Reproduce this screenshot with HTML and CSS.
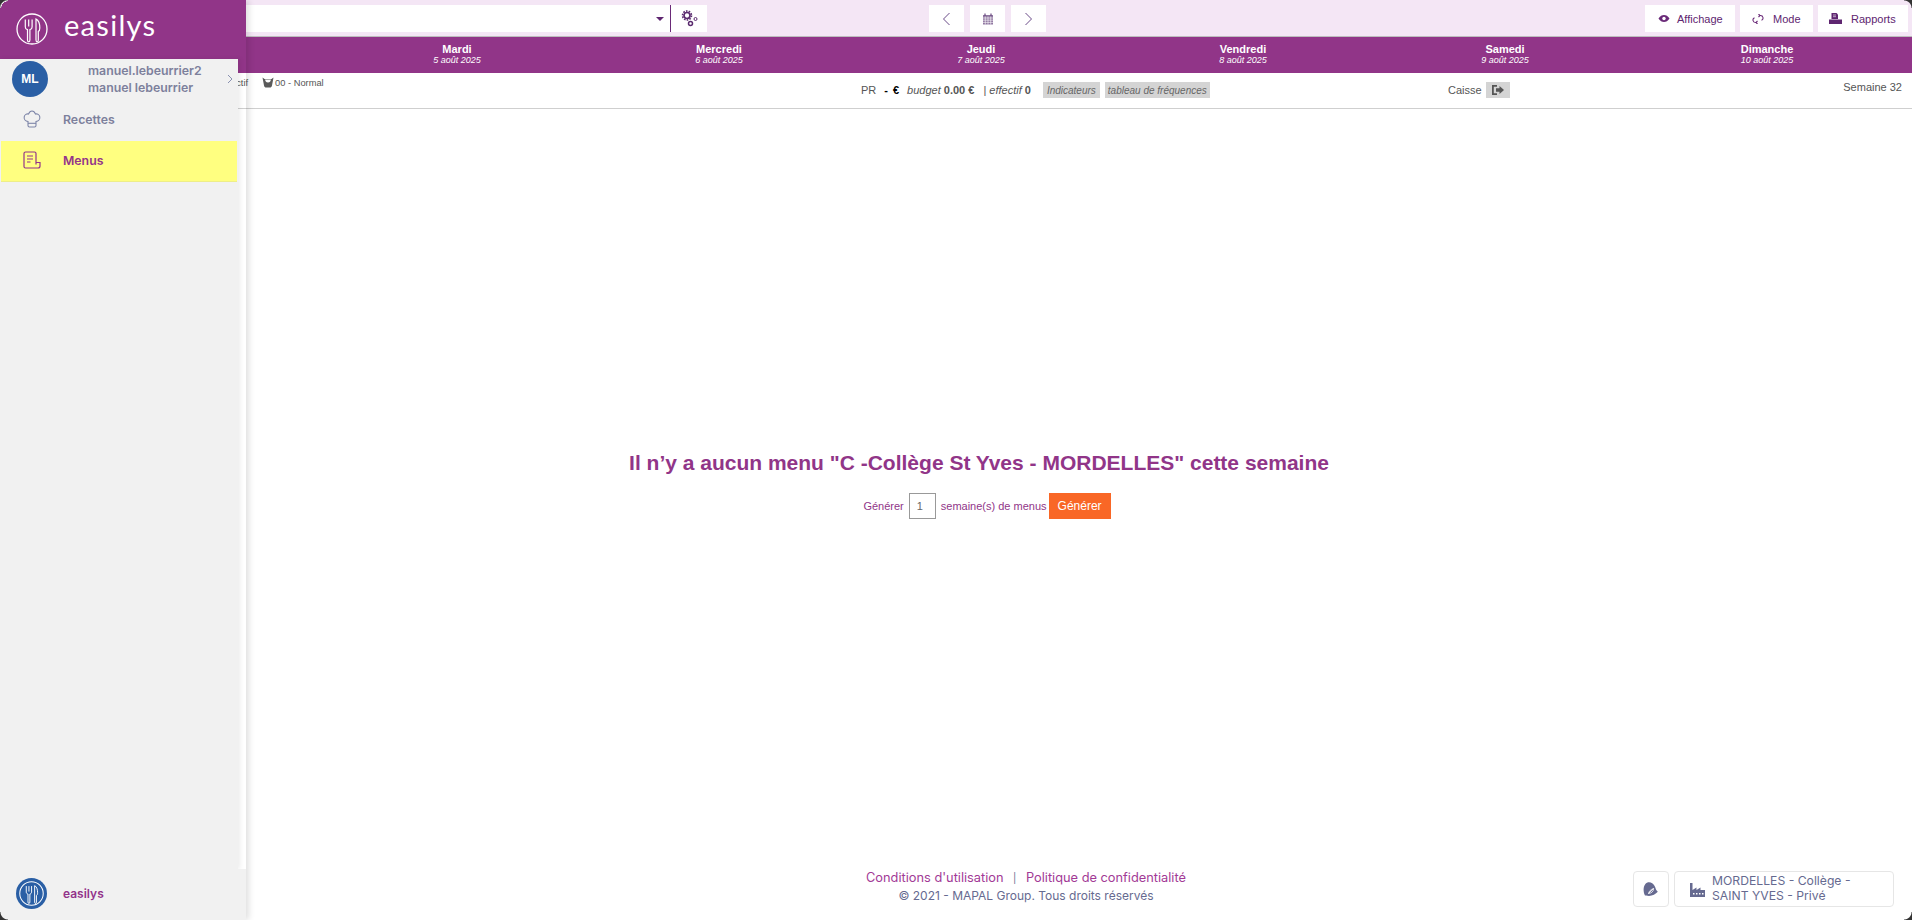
FILE: index.html
```html
<!DOCTYPE html>
<html lang="fr">
<head>
<meta charset="utf-8">
<title>Easilys - Menus</title>
<link rel="stylesheet" href="styles.css">
</head>
<body>
<svg class="defs" width="0" height="0" aria-hidden="true">
  <symbol id="logo" viewBox="0 0 32 32">
    <circle cx="16" cy="16" r="15" fill="none" stroke="currentColor" stroke-width="1.3"/>
    <path d="M9.3 6.500v7.500c0 1.600.9 2.400 2.200 2.700V27c0 2.400 2.400 2.400 2.400 0V16.700c1.300-.3 2.200-1.100 2.200-2.700V6.500M12.700 6.500v7" fill="none" stroke="currentColor" stroke-width="1.2"/>
    <path d="M20 6c2.600 1.200 3.800 4.500 3.800 9 0 2-.5 3-1.500 3.600V27c0 2.400-2.300 2.400-2.300 0V6z" fill="none" stroke="currentColor" stroke-width="1.2"/>
  </symbol>
</svg>
<div class="app">
  <header class="toolbar">
    <div class="select-box"><span class="caret"></span></div>
    <button class="tool-btn gear-btn" aria-label="Réglages">
      <svg width="17" height="17" viewBox="0 0 17 17"><g fill="none" stroke="#5a2a6e"><circle cx="6" cy="5.500" r="3" stroke-width="1.7"/><circle cx="6" cy="5.500" r="4.500" stroke-width="1.6" stroke-dasharray="1.6 1.200"/><circle cx="9.500" cy="13.500" r="2" stroke-width="1.500"/><circle cx="14.500" cy="9" r="1.500" stroke-width="1"/></g></svg>
    </button>
    <nav class="week-nav">
      <button class="tool-btn nav-btn" aria-label="Précédent"><svg width="9" height="14" viewBox="0 0 9 14"><path d="M7.500 1 1.500 7l6 6" fill="none" stroke="#6a4a88" stroke-width="1"/></svg></button>
      <button class="tool-btn nav-btn" aria-label="Calendrier"><svg width="12" height="12" viewBox="0 0 12 12"><path d="M1 2h10v9.500H1z" fill="#8f76a0"/><path d="M1 5h10M1 7.200h10M1 9.400h10M3.300 3.500v8M6 3.500v8M8.700 3.500v8" stroke="#fff" stroke-width=".6"/><path d="M3 .5v2.500M9 .5v2.500" stroke="#6a4a80" stroke-width="1.2"/></svg></button>
      <button class="tool-btn nav-btn" aria-label="Suivant"><svg width="9" height="14" viewBox="0 0 9 14"><path d="M1.500 1l6 6-6 6" fill="none" stroke="#6a4a88" stroke-width="1"/></svg></button>
    </nav>
    <div class="tool-right">
      <button class="tool-btn text-btn btn-view"><svg width="12" height="9" viewBox="0 0 12 9"><path d="M.5 4.500C2 2 4 1 6 1s4 1 5.500 3.500C10 7 8 8 6 8S2 7 .5 4.500z" fill="#6a2a78"/><circle cx="6" cy="4.500" r="1.700" fill="#fff"/></svg>Affichage</button>
      <button class="tool-btn text-btn btn-mode"><svg width="12" height="10" viewBox="0 0 12 10"><path d="M4.500 8.500H3.500a2.500 2.500 0 0 1-1-4.800M7.500 1.500h1a2.500 2.500 0 0 1 1 4.800M6.500 0 8 1.500 6.500 3M5.500 7 4 8.500 5.500 10" fill="none" stroke="#6a2a78" stroke-width="1.100"/></svg>Mode</button>
      <button class="tool-btn text-btn btn-report"><svg width="13" height="11" viewBox="0 0 13 11"><path d="M2.500 0h5l1.500 1.500V6h-6.500z" fill="#5e2570"/><path d="M0 6.500h13v4.500H0z" fill="#5e2570"/><path d="M4 2h3M4 3.700h3" stroke="#fff" stroke-width=".6"/></svg>Rapports</button>
    </div>
  </header>

  <section class="days">
    <div class="day"><strong>Lundi</strong><em>4 août 2025</em></div>
    <div class="day"><strong>Mardi</strong><em>5 août 2025</em></div>
    <div class="day"><strong>Mercredi</strong><em>6 août 2025</em></div>
    <div class="day"><strong>Jeudi</strong><em>7 août 2025</em></div>
    <div class="day"><strong>Vendredi</strong><em>8 août 2025</em></div>
    <div class="day"><strong>Samedi</strong><em>9 août 2025</em></div>
    <div class="day"><strong>Dimanche</strong><em>10 août 2025</em></div>
  </section>

  <section class="summary">
    <div class="sum-left">
      <span class="cut">Actif</span>
      <svg class="pot" width="12" height="11" viewBox="0 0 12 11"><path d="M.5 .5 2.500 2h7l2-1.500L10 8.500c-.3 1.500-1.200 2-2 2H4c-.8 0-1.700-.5-2-2z" fill="#5a5a5a"/><path d="M3 2.500c.5 2 1 3 3 3s2.500-1 3-3z" fill="#fff"/></svg>
      <span class="normal">00 - Normal</span>
    </div>
    <div class="sum-center">
      <span class="pr">PR</span><span class="dash">-</span><b class="euro">€</b>
      <span class="budget"><i>budget</i> <b>0.00 €</b></span>
      <span class="effectif">| <i>effectif</i> <b>0</b></span>
      <span class="tag tag-first">Indicateurs</span>
      <span class="tag tag-freq">tableau de fréquences</span>
    </div>
    <div class="sum-right">
      <span class="caisse">Caisse</span>
      <span class="tag tag-icon"><svg width="12" height="10" viewBox="0 0 12 10"><path d="M0 0h5v1.800H1.800v6.400H5V10H0z" fill="#555"/><path d="M4 3.300h3.500V1L12 5 7.500 9V6.700H4z" fill="#555"/></svg></span>
      <span class="week">Semaine 32</span>
    </div>
  </section>

  <main class="content">
    <div class="message">
      <h1>Il n’y a aucun menu "C -Collège St Yves - MORDELLES" cette semaine</h1>
      <div class="generate">
        <span>Générer</span>
        <span class="qty">1</span>
        <span>semaine(s) de menus</span>
        <button class="go">Générer</button>
      </div>
    </div>
    <footer class="foot">
      <div class="legal">
        <div class="links"><a>Conditions d'utilisation</a><span class="sep">|</span><a>Politique de confidentialité</a></div>
        <div class="copy">© 2021 - MAPAL Group. Tous droits réservés</div>
      </div>
      <div class="foot-actions">
        <button class="foot-btn bell" aria-label="Notifications"><svg width="16" height="16" viewBox="0 0 16 16"><path d="M2.200 3.200C4 .8 7 .7 9.200 2.200c1.700 1.200 2.800 3 3.300 4.800.3 1.400 1 2.600 2.300 3.700-2 2.300-5.300 4-8.800 4.300-1.400-.6-2.800-.7-4-.5C.4 11.500-.2 6.500 2.200 3.200z" fill="#666a90"/><path d="M5.500 12.500c.5-2.200 2.200-4 5-5 .2 2.600-1.800 4.700-5 5zM5.500 12.500l5-5" fill="none" stroke="#fff" stroke-width=".8"/></svg></button>
        <button class="foot-btn site"><svg width="15" height="15" viewBox="0 0 15 15"><path d="M0 1h2.500v7l4-2.500V8l4-2.500V8H15v7H0z" fill="#666a90"/><path d="M3 11h1.500v1.500H3zM6 11h1.500v1.500H6zM9 11h1.500v1.500H9zM12 11h1.500v1.500H12z" fill="#fff"/></svg><span class="site-name">MORDELLES - Collège - SAINT YVES - Privé</span></button>
      </div>
    </footer>
  </main>

  <aside class="sidebar">
    <div class="brand">
      <svg class="brand-logo" width="32" height="32"><use href="#logo"/></svg>
      <span class="brand-name">easilys</span>
    </div>
    <div class="side-body">
      <div class="user">
        <span class="avatar">ML</span>
        <div class="user-names"><div>manuel.lebeurrier2</div><div>manuel lebeurrier</div></div>
        <svg class="chev" width="6" height="10" viewBox="0 0 6 10"><path d="M1 1l4 4-4 4" fill="none" stroke="#7d85a8" stroke-width=".9"/></svg>
      </div>
      <a class="item recipes">
        <svg width="18" height="18" viewBox="0 0 18 18"><path d="M5 11.500C2.500 11 .8 9 1.200 6.800 1.600 4.500 3.800 3.500 5.500 4 6.300 2 7.500 1 9 1s2.700 1 3.500 3c1.700-.5 3.900.5 4.300 2.800.4 2.200-1.300 4.200-3.800 4.700v4c0 .8-.6 1.500-1.500 1.500H6.500c-.9 0-1.500-.7-1.500-1.500z" fill="none" stroke="#7d85a8" stroke-width="1.100"/><path d="M5 13.300h8" stroke="#7d85a8" stroke-width="1.100"/></svg>
        <span>Recettes</span>
      </a>
      <a class="item active">
        <svg width="18" height="18" viewBox="0 0 18 18"><path d="M13 13.500V2.500A1.500 1.500 0 0 0 11.500 1h-9A1.500 1.500 0 0 0 1 2.500v13A1.500 1.500 0 0 0 2.500 17H15a2 2 0 0 0 2-2v-3.500h-4M4 5h6M4 8h6M4 11h3.500" fill="none" stroke="#93348a" stroke-width="1.200"/></svg>
        <span>Menus</span>
      </a>
    </div>
    <div class="side-foot">
      <span class="foot-logo"><svg width="25" height="25"><use href="#logo"/></svg></span>
      <span class="foot-name">easilys</span>
    </div>
  </aside>

  <span class="corner tl"></span>
  <span class="corner tr"></span>
  <span class="corner bl"></span>
  <span class="corner br"></span>
</div>
</body>
</html>
```
FILE: styles.css
```css
* { box-sizing: border-box; }
html, body { margin: 0; height: 100%; overflow: hidden; background: #fff; }
body { font-family: "Liberation Sans", Arial, sans-serif; font-size: 11px; color: #555; }
.defs { position: absolute; }
button { font-family: inherit; border: 0; padding: 0; cursor: pointer; }

.app { position: relative; height: 920px; display: flex; flex-direction: column; overflow: hidden; }

/* top toolbar */
.toolbar { height: 37px; flex: none; display: flex; align-items: flex-start; padding: 5px 4px 0 246px; background: #f4e6f5; border-bottom: 1px solid #bdbdbd; }
.select-box { width: 425px; height: 27px; background: #fff; border-right: 1.5px solid #6a2a78; position: relative; }
.caret { position: absolute; right: 6px; top: 12px; border: 4px solid transparent; border-top: 4px solid #5e2570; border-bottom: 0; }
.tool-btn { height: 27px; background: #fff; display: flex; align-items: center; justify-content: center; }
.gear-btn { width: 36px; }
.week-nav { display: flex; gap: 6px; margin-left: 222px; }
.nav-btn { width: 35px; }
.tool-right { display: flex; gap: 5px; margin-left: auto; }
.text-btn { color: #5e2570; font-size: 11px; justify-content: flex-start; }
.text-btn svg { flex: none; }
.btn-view { width: 90px; padding-left: 13px; gap: 7px; }
.btn-mode { width: 73px; padding-left: 12px; gap: 9px; }
.btn-report { width: 90px; padding-left: 11px; gap: 9px; }

/* days header */
.days { height: 36px; flex: none; display: grid; grid-template-columns: repeat(7, 262px); padding-left: 64px; background: #913588; color: #fff; }
.day { display: flex; flex-direction: column; align-items: center; padding-top: 6px; line-height: 12px; }
.day strong { font-size: 11px; }
.day em { font-size: 9px; line-height: 11px; }

/* summary row */
.summary { height: 36px; flex: none; display: flex; padding-left: 230px; border-bottom: 1px solid #cfcfcf; }
.sum-left { width: 631px; display: flex; align-items: flex-start; padding-top: 4px; font-size: 9.3px; line-height: 12px; }
.pot { margin: 0 1px 0 14px; }
.sum-center { width: 587px; display: flex; align-items: center; height: 34px; font-size: 11px; white-space: pre; }
.dash { margin-left: 8px; color: #000; font-weight: bold; }
.euro { margin-left: 5px; color: #000; }
.budget { margin-left: 8px; }
.effectif { margin-left: 9px; }
.tag { background: #d4d4d4; font-style: italic; font-size: 10px; height: 16px; padding: 0 4px; display: inline-flex; align-items: center; color: #666; margin-left: 5px; }
.tag-first { margin-left: 12px; }
.tag-freq { padding: 0 3px; }
.sum-right { flex: 1; display: flex; align-items: center; height: 34px; padding-right: 10px; }
.tag-icon { width: 24px; padding: 0; justify-content: center; margin-left: 4px; }
.week { margin-left: auto; margin-top: -7px; font-weight: 400; color: #555; }

/* content */
.content { flex: 1; display: flex; flex-direction: column; min-height: 0; }
.message { flex: 1; padding: 341px 0 0 46px; text-align: center; color: #913588; }
.message h1 { margin: 0; font-size: 21px; line-height: 26px; font-weight: bold; }
.generate { display: flex; justify-content: center; align-items: center; gap: 5px; margin-top: 17px; padding-left: 16px; font-size: 11px; }
.qty { width: 27px; height: 26px; border: 1px solid #999; color: #666; display: flex; align-items: center; padding-left: 7px; }
.go { width: 62px; height: 26px; background: #f96726; color: #fff; font-size: 12px; margin-left: -3px; }

.foot { height: 52px; flex: none; display: flex; font-family: "Inter", "Noto Sans", sans-serif; padding-left: 866px; }
.legal { padding-top: 1px; }
.links { display: flex; font-size: 12.8px; line-height: 18px; color: #a23a96; white-space: nowrap; }
.sep { margin: 0 9.5px; color: #666a90; font-size: 10px; }
.copy { font-size: 12px; line-height: 18px; color: #666a90; text-align: center; white-space: nowrap; }
.foot-actions { margin-left: auto; display: flex; gap: 5px; padding: 3px 18px 0 0; }
.foot-btn { height: 36px; background: #fff; border: 1px solid #e6e6e6; border-radius: 4px; display: flex; align-items: center; font-family: inherit; color: #666a90; }
.bell { width: 36px; justify-content: center; }
.site { width: 220px; padding: 0 0 2px 15px; gap: 7px; font-size: 12.2px; line-height: 15px; text-align: left; }
.site svg { flex: none; margin-top: 2px; }
.site-name { width: 150px; }

/* sidebar drawer */
.sidebar { position: absolute; left: 0; top: 0; bottom: 0; width: 246px; display: flex; flex-direction: column; box-shadow: 3px 0 6px rgba(0,0,0,.12); font-family: "Inter", "Noto Sans", sans-serif; }
.brand { height: 59px; flex: none; display: flex; align-items: center; padding: 0 0 2px 16px; background: #913588; color: #fff; }
.brand-logo { flex: none; }
.brand-name { font-family: "Lato", sans-serif; font-weight: 400; font-size: 29px; letter-spacing: 1.3px; margin-left: 16px; margin-top: -8px; }
.side-body { flex: 1; width: 238px; background: #f1f1f1; padding-top: 2px; box-shadow: 2px 0 5px rgba(0,0,0,.08); }
.user { height: 36px; display: flex; align-items: center; padding-left: 12px; position: relative; }
.avatar { width: 36px; height: 36px; border-radius: 50%; background: #2a5fa5; color: #fff; display: flex; align-items: center; justify-content: center; font: bold 12px "Liberation Sans", sans-serif; }
.user-names { margin-left: 40px; font-size: 12.3px; font-weight: 600; line-height: 17px; color: #7d809c; margin-top: -1px; }
.chev { position: absolute; left: 227px; top: 13px; }
.item { height: 40px; display: flex; align-items: center; padding-left: 23px; font-size: 12.3px; font-weight: 600; color: #7d809c; margin-top: 4px; }
.item span { margin-left: 22px; }
.item.recipes { padding-bottom: 4px; }
.item.active { height: 41px; margin: 0 1px; padding: 0 0 2px 22px; background: #ffff80; border-bottom: 1px solid #eeee88; color: #93348a; }
.side-foot { height: 51px; flex: none; background: #f1f1f1; display: flex; align-items: center; padding: 0 0 2px 16px; }
.foot-logo { width: 31px; height: 31px; border-radius: 50%; background: #2a5fa5; color: #fff; display: flex; align-items: center; justify-content: center; }
.foot-name { margin-left: 16px; font-size: 12px; font-weight: 600; color: #93348a; }

/* rounded window corners */
.corner { position: absolute; width: 8px; height: 8px; }
.tl { left: 0; top: 0; background: radial-gradient(circle at 100% 100%, transparent 6.5px, #fff 7px, #333 8.5px); }
.tr { right: 0; top: 0; background: radial-gradient(circle at 0 100%, transparent 7px, #333 8px); }
.bl { left: 0; bottom: 0; background: radial-gradient(circle at 100% 0, transparent 7px, #333 8px); }
.br { right: 0; bottom: 0; background: radial-gradient(circle at 0 0, transparent 7px, #333 8px); }
```
